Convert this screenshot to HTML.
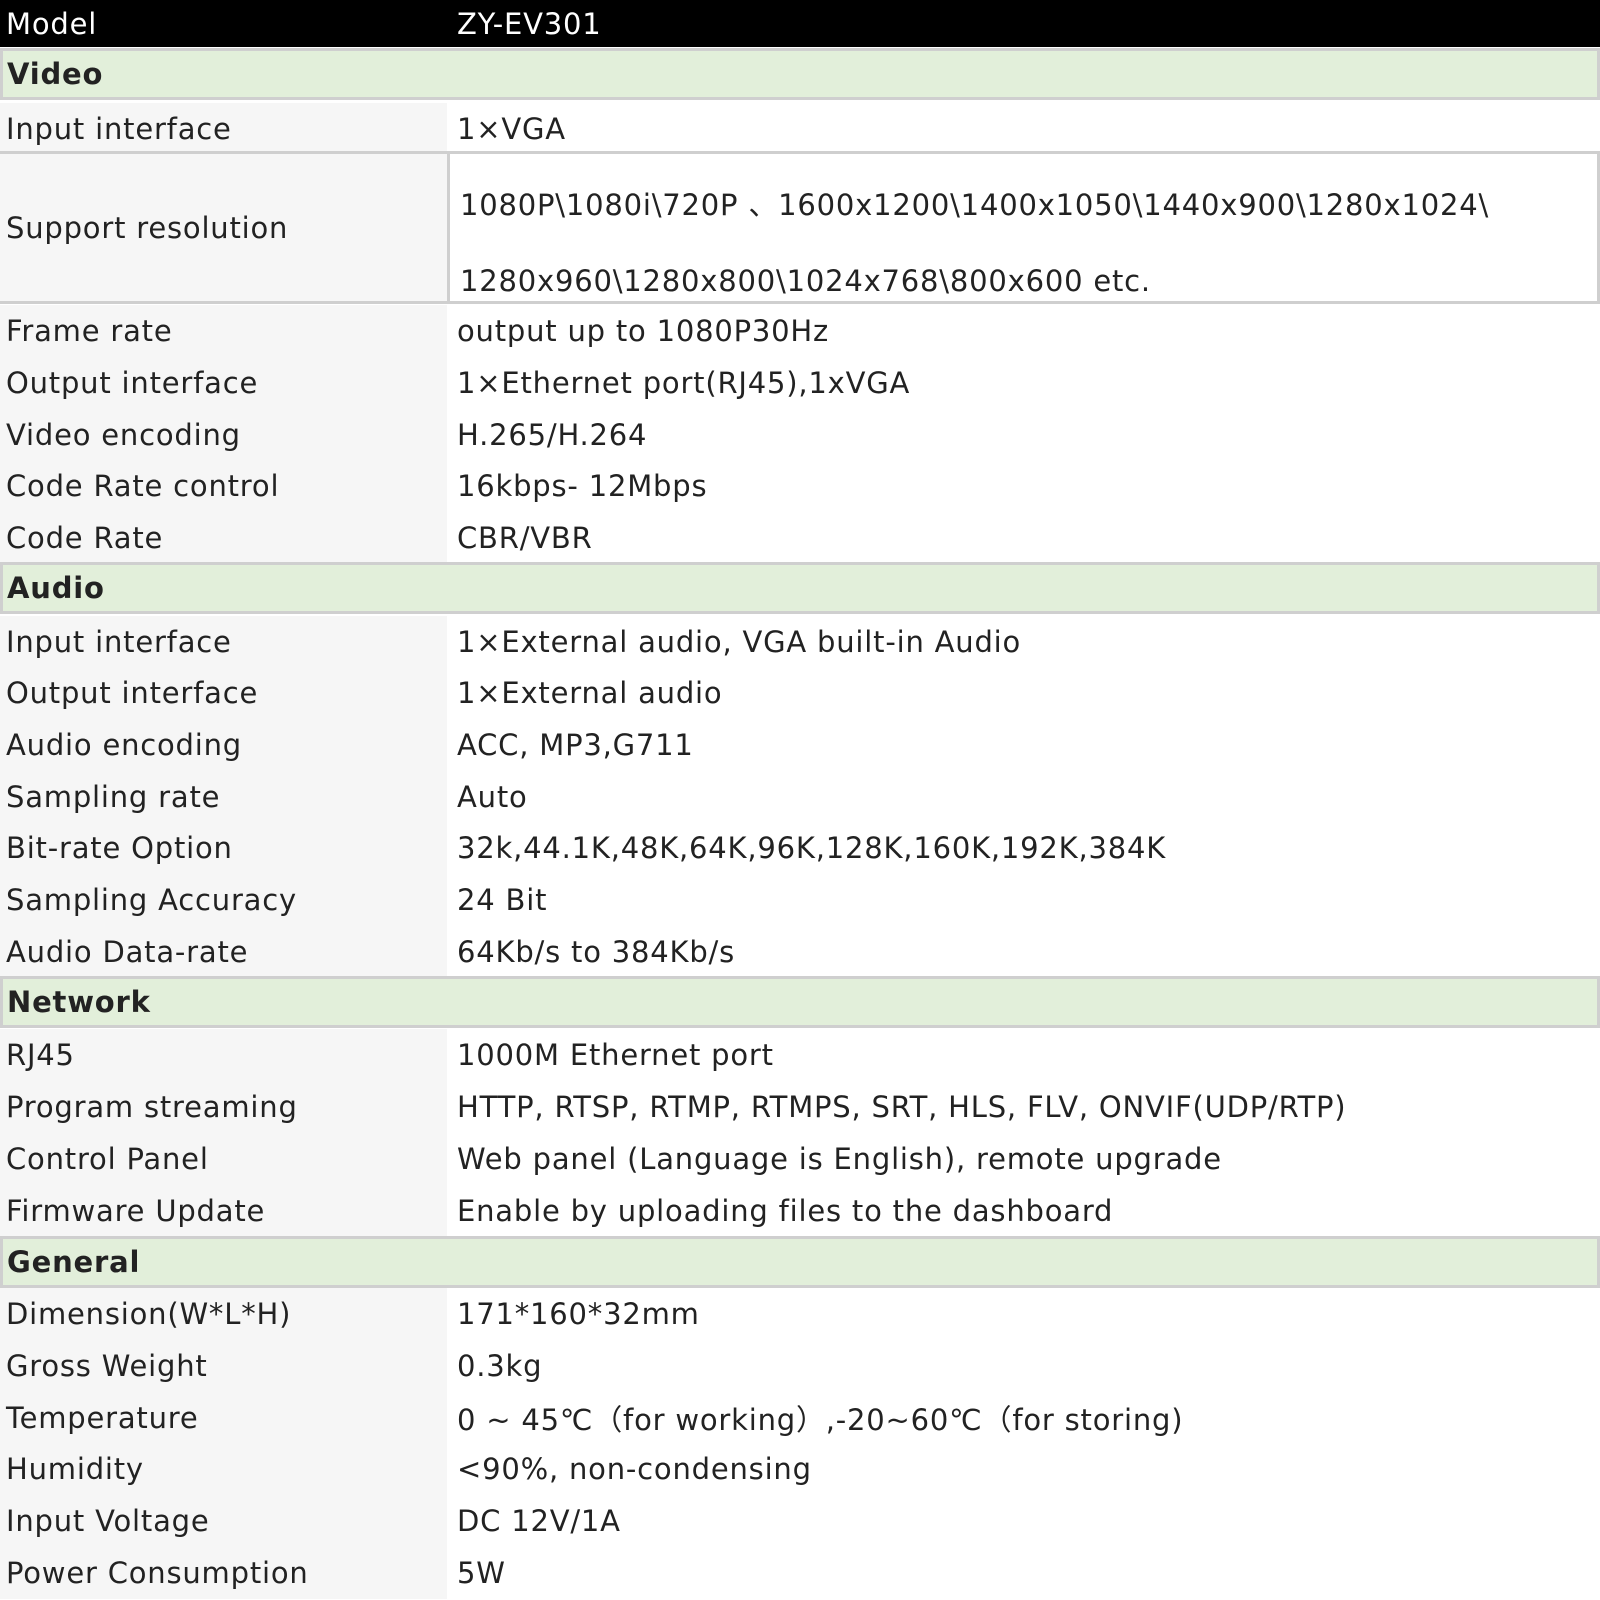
<!DOCTYPE html>
<html><head><meta charset="utf-8"><style>
body{margin:0;width:1600px;height:1600px;overflow:hidden;background:#fff;font-family:"DejaVu Sans","Liberation Sans","Noto Sans CJK SC",sans-serif;font-size:29px;letter-spacing:0.8px;color:#222}
.r{position:absolute;left:0;width:1600px;height:51.6px;box-sizing:border-box}
.l{position:absolute;left:0;top:0;width:447px;height:100%;background:#f6f6f6;padding-left:6px;box-sizing:border-box;display:flex;align-items:center}
.v{position:absolute;left:447px;top:0;right:0;height:100%;background:#fff;padding-left:10px;box-sizing:border-box;display:flex;align-items:center}
.h{background:#e2efda;border:3px solid #cfcfcf;font-weight:bold;padding-left:4px;display:flex;align-items:center;color:#222}
.m{background:#000;color:#fff;height:47px}
.m .l,.m .v{background:#000}
</style></head><body>
<div class="r m" style="top:0"><div class="l">Model</div><div class="v">ZY-EV301</div></div>
<div class="r h" style="top:48px">Video</div>
<div class="r" style="top:103px"><div class="l">Input interface</div><div class="v">1×VGA</div></div>
<div class="r" style="top:151px;height:153px;border-top:3px solid #cfcfcf;border-bottom:3px solid #cfcfcf"><div class="l">Support resolution</div><div class="v" style="border:3px solid #cfcfcf;border-top:0;border-bottom:0;display:block;padding-top:13px;line-height:76px">1080P\1080i\720P 、1600x1200\1400x1050\1440x900\1280x1024\<br>1280x960\1280x800\1024x768\800x600 etc.</div></div>
<div class="r" style="top:305px"><div class="l">Frame rate</div><div class="v">output up to 1080P30Hz</div></div>
<div class="r" style="top:357px"><div class="l">Output interface</div><div class="v">1×Ethernet port(RJ45),1xVGA</div></div>
<div class="r" style="top:409px"><div class="l">Video encoding</div><div class="v">H.265/H.264</div></div>
<div class="r" style="top:460px"><div class="l">Code Rate control</div><div class="v">16kbps- 12Mbps</div></div>
<div class="r" style="top:512px"><div class="l">Code Rate</div><div class="v">CBR/VBR</div></div>
<div class="r h" style="top:562px">Audio</div>
<div class="r" style="top:616px"><div class="l">Input interface</div><div class="v">1×External audio, VGA built-in Audio</div></div>
<div class="r" style="top:667px"><div class="l">Output interface</div><div class="v">1×External audio</div></div>
<div class="r" style="top:719px"><div class="l">Audio encoding</div><div class="v">ACC, MP3,G711</div></div>
<div class="r" style="top:771px"><div class="l">Sampling rate</div><div class="v">Auto</div></div>
<div class="r" style="top:822px"><div class="l">Bit-rate Option</div><div class="v">32k,44.1K,48K,64K,96K,128K,160K,192K,384K</div></div>
<div class="r" style="top:874px"><div class="l">Sampling Accuracy</div><div class="v">24 Bit</div></div>
<div class="r" style="top:926px"><div class="l">Audio Data-rate</div><div class="v">64Kb/s to 384Kb/s</div></div>
<div class="r h" style="top:976px">Network</div>
<div class="r" style="top:1029px"><div class="l">RJ45</div><div class="v">1000M Ethernet port</div></div>
<div class="r" style="top:1081px"><div class="l">Program streaming</div><div class="v">HTTP, RTSP, RTMP, RTMPS, SRT, HLS, FLV, ONVIF(UDP/RTP)</div></div>
<div class="r" style="top:1133px"><div class="l">Control Panel</div><div class="v">Web panel (Language is English), remote upgrade</div></div>
<div class="r" style="top:1185px"><div class="l">Firmware Update</div><div class="v">Enable by uploading files to the dashboard</div></div>
<div class="r h" style="top:1236px">General</div>
<div class="r" style="top:1288px"><div class="l">Dimension(W*L*H)</div><div class="v">171*160*32mm</div></div>
<div class="r" style="top:1340px"><div class="l">Gross Weight</div><div class="v">0.3kg</div></div>
<div class="r" style="top:1392px"><div class="l">Temperature</div><div class="v">0 ~ 45℃（for working）,-20~60℃（for storing)</div></div>
<div class="r" style="top:1443px"><div class="l">Humidity</div><div class="v">&lt;90%, non-condensing</div></div>
<div class="r" style="top:1495px"><div class="l">Input Voltage</div><div class="v">DC 12V/1A</div></div>
<div class="r" style="top:1547px"><div class="l">Power Consumption</div><div class="v">5W</div></div>
</body></html>
